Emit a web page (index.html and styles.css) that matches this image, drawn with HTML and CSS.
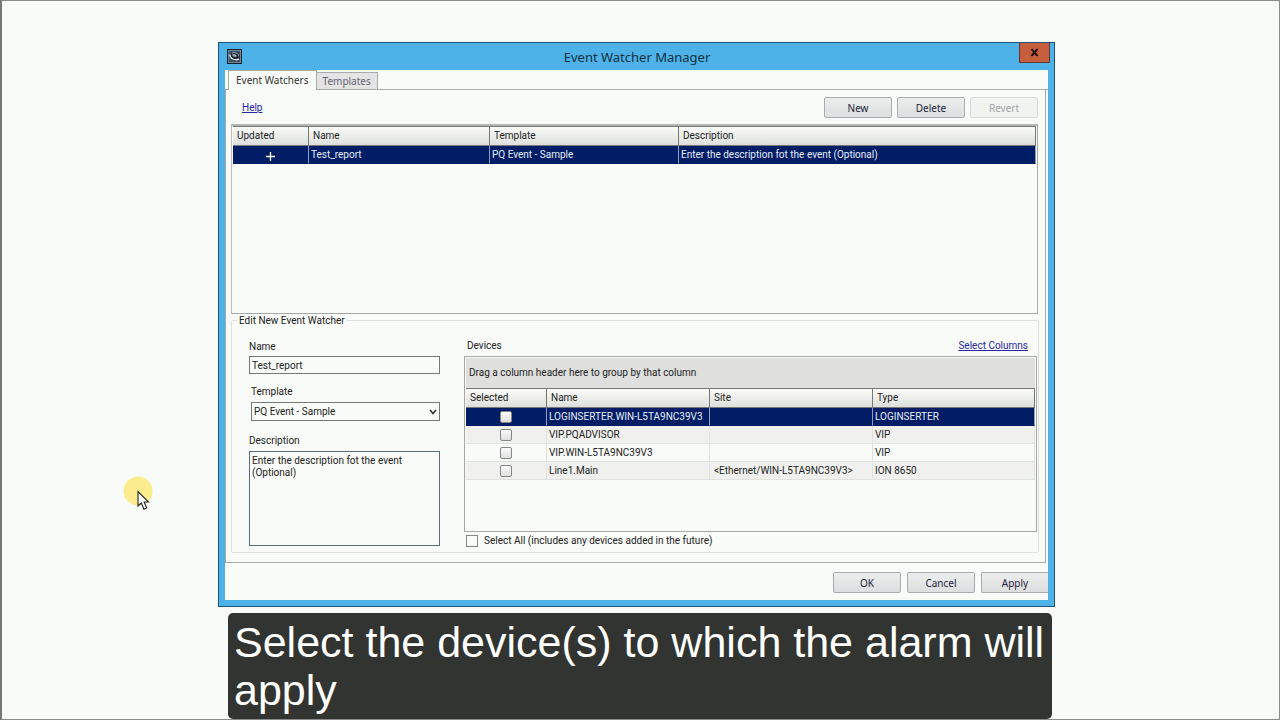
FILE: index.html
```html
<!DOCTYPE html>
<html lang="en">
<head>
<meta charset="utf-8">
<title>Event Watcher Manager</title>
<link rel="stylesheet" href="styles.css">
</head>
<body>
<div class="stage">
  <section class="window">
    <header class="titlebar">
      <svg class="app-icon" viewBox="0 0 15 15" aria-hidden="true">
        <rect x="0.5" y="0.5" width="14" height="14" fill="#3a4f62" stroke="#16212c"/>
        <rect x="1.5" y="1.5" width="12" height="12" fill="none" stroke="#70889b"/>
        <ellipse cx="8" cy="7.500" rx="5" ry="3.600" transform="rotate(20 8 7.500)" fill="#18222d"/>
        <path d="M2.800 5.500C3 9.500 7.500 12 12 10" fill="none" stroke="#e4ecf0" stroke-width="1.400"/>
        <path d="M5 4.200C8 2.800 11.500 4.500 11.800 7.500" fill="none" stroke="#9fb0bd"/>
        <ellipse cx="7.500" cy="6.500" rx="2.300" ry="1.400" transform="rotate(20 7.500 6.500)" fill="#9babb8"/>
      </svg>
      <h1 class="title">Event Watcher Manager</h1>
      <button class="close" type="button" aria-label="Close">
        <svg viewBox="0 0 10 10" class="close-icon" aria-hidden="true"><path d="M2 1.500L8 8.500M8 1.500L2 8.500" stroke="#1a0d08" stroke-width="2.200"/><path d="M1 1.500h2.500M6.500 1.500H9M1 8.500h2.500M6.500 8.500H9" stroke="#1a0d08"/></svg>
      </button>
    </header>
    <div class="client">
      <nav class="tabs" role="tablist">
        <button class="tab tab-active" type="button" role="tab" aria-selected="true">Event Watchers</button>
        <button class="tab" type="button" role="tab" aria-selected="false">Templates</button>
      </nav>
      <main class="panel">
        <div class="toolbar">
          <a class="link" href="#help">Help</a>
          <div class="buttons">
            <button class="btn" type="button">New</button>
            <button class="btn" type="button">Delete</button>
            <button class="btn" type="button" disabled>Revert</button>
          </div>
        </div>
        <div class="grid grid-events">
          <table class="table">
            <colgroup><col class="c-updated"><col class="c-name"><col class="c-template"><col></colgroup>
            <thead><tr><th>Updated</th><th>Name</th><th>Template</th><th>Description</th></tr></thead>
            <tbody><tr class="selected">
              <td class="center"><svg class="plus" viewBox="0 0 9 9" role="img" aria-label="Added"><path d="M4.500 0v9M0 4.500h9" stroke="#fff" stroke-width="1.300"/></svg></td>
              <td>Test_report</td><td>PQ Event - Sample</td><td>Enter the description fot the event (Optional)</td>
            </tr></tbody>
          </table>
        </div>
        <fieldset class="editor">
          <legend>Edit New Event Watcher</legend>
          <div class="form">
            <label for="name">Name</label>
            <input id="name" class="text" type="text" value="Test_report">
            <div class="indent">
              <label for="template">Template</label>
              <div class="select-wrap">
                <select id="template" class="select"><option>PQ Event - Sample</option></select>
                <svg class="chevron" viewBox="0 0 8 6" aria-hidden="true"><path d="M1 1l3 3.500L7 1" fill="none" stroke="#333" stroke-width="1.600"/></svg>
              </div>
            </div>
            <label for="description">Description</label>
            <textarea id="description" class="area">Enter the description fot the event (Optional)</textarea>
          </div>
          <div class="devices">
            <div class="devices-head"><span>Devices</span><a class="link" href="#columns">Select Columns</a></div>
            <div class="grid grid-devices">
              <div class="group-bar">Drag a column header here to group by that column</div>
              <table class="table">
                <colgroup><col class="c-selected"><col class="c-device"><col class="c-device"><col></colgroup>
                <thead><tr><th>Selected</th><th>Name</th><th>Site</th><th>Type</th></tr></thead>
                <tbody>
                  <tr class="selected"><td class="center"><input class="check" type="checkbox" aria-label="Select LOGINSERTER.WIN-L5TA9NC39V3"></td><td>LOGINSERTER.WIN-L5TA9NC39V3</td><td></td><td>LOGINSERTER</td></tr>
                  <tr class="odd"><td class="center"><input class="check" type="checkbox" aria-label="Select VIP.PQADVISOR"></td><td>VIP.PQADVISOR</td><td></td><td>VIP</td></tr>
                  <tr><td class="center"><input class="check" type="checkbox" aria-label="Select VIP.WIN-L5TA9NC39V3"></td><td>VIP.WIN-L5TA9NC39V3</td><td></td><td>VIP</td></tr>
                  <tr class="odd"><td class="center"><input class="check" type="checkbox" aria-label="Select Line1.Main"></td><td>Line1.Main</td><td class="site">&lt;Ethernet/WIN-L5TA9NC39V3&gt;</td><td>ION 8650</td></tr>
                </tbody>
              </table>
            </div>
            <label class="select-all"><input class="check check-flat" type="checkbox">Select All (includes any devices added in the future)</label>
          </div>
        </fieldset>
      </main>
      <footer class="footer">
        <button class="btn" type="button">OK</button>
        <button class="btn" type="button">Cancel</button>
        <button class="btn btn-edge" type="button">Apply</button>
      </footer>
    </div>
  </section>
  <p class="caption">Select the device(s) to which the alarm will apply</p>
  <svg class="pointer" viewBox="0 0 32 36" aria-hidden="true">
    <circle cx="15" cy="15" r="14.500" fill="#fbec8e"/>
    <path d="M15 15.500V30l3.300-3L21 33.200l2.700-1.200-2.600-6H25.500z" fill="#fff" stroke="#222" stroke-width="1.100"/>
  </svg>
</div>
</body>
</html>
```
FILE: styles.css
```css
* { box-sizing: border-box; }

body {
  margin: 0;
  background: #f9fbf8;
  color: #222;
  font-family: Roboto, "Noto Sans", sans-serif;
  font-size: 10px;
}

button, input, select, textarea { font: inherit; color: inherit; margin: 0; }

.stage {
  position: relative;
  min-height: 100vh;
  padding: 41px 224px 0 216px;
  border: 1px solid #8a8a8a;
  border-left: 2px solid #777;
}

.window {
  display: flex;
  flex-direction: column;
  background: #4db2e8;
  border: 1px solid #1d5378;
  padding: 0 6px 6px;
}

.titlebar {
  display: grid;
  grid-template-columns: 30px 1fr 31px;
  align-items: center;
  height: 27px;
  margin-right: -2px;
}

.app-icon { width: 15px; height: 15px; margin-left: 2px; }

.title {
  margin: 0;
  text-align: center;
  font-family: "Noto Sans", "Open Sans", sans-serif;
  font-size: 13px;
  font-weight: 400;
  color: #12303f;
}

.close {
  align-self: start;
  display: flex;
  align-items: center;
  justify-content: center;
  height: 20px;
  padding: 0;
  background: #c75f3e;
  border: 1px solid #5f3a38;
  border-top: 0;
}

.close-icon { width: 9px; height: 9px; }

.client { background: #f9fbf8; overflow: hidden; }

.tabs {
  display: flex;
  align-items: flex-end;
  height: 20px;
  padding-left: 3px;
  border-bottom: 1px solid #a9abaa;
  font-family: "Noto Sans", "Open Sans", sans-serif;
}

.tab {
  height: 17px;
  padding: 0 6px;
  background: #e3e4e3;
  border: 1px solid #a9abaa;
  border-left: 0;
  border-bottom: 0;
  color: #666473;
  line-height: 15px;
}

.tab-active {
  height: 20px;
  padding: 0 7px;
  margin-bottom: -1px;
  background: #f9fbf8;
  border-left: 1px solid #a9abaa;
  color: #333;
}

.panel {
  margin-right: 2px;
  padding: 7px 7px 9px 5px;
  border: 1px solid #a5a8a8;
  border-top: 0;
}

.toolbar {
  display: flex;
  align-items: center;
  justify-content: space-between;
  padding-left: 11px;
}

.link { color: #2626a8; }

.buttons { display: flex; gap: 5px; }

.btn {
  width: 68px;
  height: 21px;
  padding: 0;
  border: 1px solid #a9abb0;
  border-radius: 2px;
  background: linear-gradient(#eceeed, #dcdedf);
  color: #22223a;
  font-family: "Noto Sans", "Open Sans", sans-serif;
  line-height: 18px;
}

.btn:disabled { background: #f1f3f1; border-color: #d8dad9; color: #a3a5ab; }

.grid { border: 1px solid #a5a8a6; }

.grid-events { height: 190px; margin-top: 6px; padding: 0 1px; border-left-color: #c5b9bd; border-top: 2px solid #b5b7b4; }

.table { width: 100%; border-collapse: separate; border-spacing: 0; table-layout: fixed; }

.c-updated { width: 76px; }
.c-name { width: 181px; }
.c-template { width: 189px; }
.c-selected { width: 81px; }
.c-device { width: 163px; }

.table th {
  height: 20px;
  padding: 0 4px;
  background: linear-gradient(#fbfcfa, #dddfdc);
  border-right: 1px solid #777;
  border-top: 1px solid #777;
  border-bottom: 1px solid #777;
  text-align: left;
  font-weight: 400;
  line-height: 14px;
}

.table td {
  height: 18px;
  padding: 0 2px;
  border-right: 1px solid #e0e2e0;
  border-bottom: 1px solid #e0e2e0;
  line-height: 14px;
  white-space: nowrap;
}

.table .center { text-align: center; }
.table .site { padding-left: 4px; }

.odd { background: #f0f1ef; }
.selected { background: #001d66; color: #e8ecf5; }
.selected td { border-bottom-color: #001d66; border-right-color: #8f9dbd; }

.plus { display: block; width: 9px; height: 9px; margin: 3px auto 0; }

.editor {
  display: grid;
  grid-template-columns: 191px 1fr;
  gap: 24px;
  min-width: 0;
  margin: 0 -1px 0 0;
  padding: 13px 1px 5px 17px;
  border: 1px solid #dfe1df;
  border-radius: 2px;
}

.editor legend { height: 13px; margin-left: -12px; padding: 0 2px; line-height: 13px; }

.form { display: flex; flex-direction: column; line-height: 12px; padding-top: 1px; }

.form label { display: block; }

.text, .area { border: 1px solid #777; background: #f9fbf8; padding: 0 2px; }

.text { height: 18px; margin: 3px 0 12px; }

.indent { padding-left: 2px; margin-bottom: 14px; }

.select-wrap { position: relative; margin-top: 4px; }

.select {
  width: 100%;
  height: 19px;
  padding: 0 2px;
  appearance: none;
  border: 1px solid #777;
  border-radius: 0;
  background: #f9fbf8;
}

.chevron { position: absolute; right: 3px; top: 7px; width: 8px; height: 6px; pointer-events: none; }

.area { height: 95px; margin-top: 4px; padding: 3px 2px; border-color: #5b6b80; resize: none; line-height: 12px; }

.devices { display: flex; flex-direction: column; min-width: 0; }

.devices-head {
  display: flex;
  justify-content: space-between;
  padding: 0 9px 4px 3px;
  line-height: 12px;
}

.grid-devices { height: 176px; padding: 1px; }

.group-bar { height: 30px; padding-left: 3px; line-height: 30px; background: #dfe0de; }

.check {
  appearance: none;
  display: block;
  width: 12px;
  height: 12px;
  margin: 0 auto;
  border: 1px solid #858585;
  border-radius: 2px;
  background: linear-gradient(#fbfbfb, #dfe0df);
}

.check-flat { margin: 0; border-radius: 0; background: #f9fbf8; }

.select-all { display: flex; align-items: center; gap: 6px; padding: 3px 0 0 2px; line-height: 12px; }

.footer { display: flex; justify-content: flex-end; gap: 6px; padding: 9px 0 7px; }

.btn-edge { width: 67px; border-right: 0; border-radius: 2px 0 0 2px; }

.caption {
  margin: 6px 3px 0 10px;
  padding: 5px 2px 5px 6px;
  border-radius: 5px;
  background: #323431;
  color: #fff;
  font-family: "Liberation Sans", Arial, sans-serif;
  font-size: 43px;
  line-height: 48px;
}

.pointer { position: absolute; left: 121px; top: 475px; width: 32px; height: 36px; }
```
